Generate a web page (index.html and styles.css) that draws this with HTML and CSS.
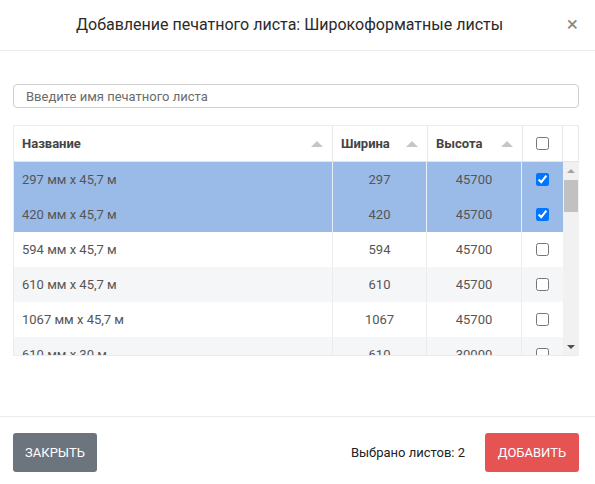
FILE: index.html
```html
<!DOCTYPE html>
<html lang="ru">
<head>
<meta charset="utf-8">
<link rel="stylesheet" href="styles.css">
</head>
<body>
<div class="modal">
  <div class="modal-header">
    <div class="title">Добавление печатного листа: Широкоформатные листы</div>
    <div class="close">×</div>
  </div>
  <div class="modal-body">
    <input class="search" type="text" placeholder="Введите имя печатного листа">
    <div class="grid">
      <div class="grid-head">
        <div class="hcell"><span>Название</span><i class="sort"></i></div>
        <div class="hcell"><span>Ширина</span><i class="sort"></i></div>
        <div class="hcell"><span>Высота</span><i class="sort"></i></div>
        <div class="hcell check"><input type="checkbox"></div>
        <div class="hcell blank"></div>
      </div>
      <div class="grid-main">
        <div class="rows">
          <div class="row sel"><div class="c name">297 мм x 45,7 м</div><div class="c num">297</div><div class="c num">45700</div><div class="c check"><input type="checkbox" checked></div></div>
          <div class="row sel"><div class="c name">420 мм x 45,7 м</div><div class="c num">420</div><div class="c num">45700</div><div class="c check"><input type="checkbox" checked></div></div>
          <div class="row"><div class="c name">594 мм x 45,7 м</div><div class="c num">594</div><div class="c num">45700</div><div class="c check"><input type="checkbox"></div></div>
          <div class="row alt"><div class="c name">610 мм x 45,7 м</div><div class="c num">610</div><div class="c num">45700</div><div class="c check"><input type="checkbox"></div></div>
          <div class="row"><div class="c name">1067 мм x 45,7 м</div><div class="c num">1067</div><div class="c num">45700</div><div class="c check"><input type="checkbox"></div></div>
          <div class="row alt"><div class="c name">610 мм x 30 м</div><div class="c num">610</div><div class="c num">30000</div><div class="c check"><input type="checkbox"></div></div>
        </div>
        <div class="scrollbar">
          <div class="arrow up"></div>
          <div class="thumb"></div>
          <div class="track"></div>
          <div class="arrow down"></div>
        </div>
      </div>
    </div>
  </div>
  <div class="modal-footer">
    <button class="btn btn-close">ЗАКРЫТЬ</button>
    <div class="footer-right">
      <span class="count">Выбрано листов: 2</span>
      <button class="btn btn-add">ДОБАВИТЬ</button>
    </div>
  </div>
</div>
</body>
</html>
```
FILE: styles.css
```css
* { box-sizing: border-box; }
html, body { margin: 0; padding: 0; background: #fff; }
body { font-family: Roboto, "Liberation Sans", sans-serif; color: #333; }
.modal { width: 595px; height: 484px; display: flex; flex-direction: column; }
.modal-header {
  height: 51px; border-bottom: 1px solid #e9ecef;
  display: flex; align-items: center;
  padding: 0 17px 0 76px;
}
.title { font-size: 16px; color: #2a2a2a; flex: 1; padding-bottom: 2px; }
.close { font-size: 21px; color: #888; line-height: 1; padding-bottom: 2px; }
.modal-body { height: 365px; padding: 33px 16px 0 13px; }
.search {
  display: block; width: 566px; height: 24px; margin: 0;
  border: 1px solid #cfcfcf; border-radius: 4px; padding: 0 12px;
  font-family: Roboto, "Liberation Sans", sans-serif; font-size: 13px; color: #333;
  outline: none;
}
.search::placeholder { color: #6b6b6b; }
.grid { margin-top: 17px; width: 566px; border: 1px solid #ececec; border-right: 0; }
.grid-head {
  display: grid; grid-template-columns: 319px 95px 95px 40px 16px;
  height: 36px; border-bottom: 1px solid #e4e4e4;
}
.hcell {
  display: flex; align-items: center; justify-content: space-between;
  padding: 0 9px 0 8px; border-right: 1px solid #e8e8e8;
  font-size: 13px; font-weight: 700; color: #444;
}
.hcell.check { justify-content: center; padding: 0; }
.hcell.blank { padding: 0; }
.sort { width: 0; height: 0; border-left: 6px solid transparent; border-right: 6px solid transparent; border-bottom: 6px solid #c6c6c6; }
.hcell input, .c.check input { margin: 0; width: 13px; height: 13px; }
.grid-main { display: flex; height: 193px; }
.rows { width: 549px; overflow: hidden; }
.row { display: grid; grid-template-columns: 318px 95px 95px 41px; height: 35px; font-size: 13px; color: #555; }
.row.sel { background: #9abbe8; }
.row.alt { background: #f5f6f8; }
.c { display: flex; align-items: center; border-right: 1px solid #ececec; }
.row.sel .c { border-right-color: #e8eef8; }
.c.name { padding-left: 8px; border-right: 0; }
.c.num { justify-content: center; }
.c.num:nth-child(2) { border-left: 1px solid #ececec; }
.row.sel .c.num:nth-child(2) { border-left-color: #e8eef8; }
.c.check { justify-content: center; border-right: 0; padding-right: 1px; }
.scrollbar { width: 16px; background: #f1f1f1; display: flex; flex-direction: column; }
.arrow { height: 17px; display: flex; align-items: center; justify-content: center; }
.arrow.up::before { content: ""; border-left: 4px solid transparent; border-right: 4px solid transparent; border-bottom: 4px solid #a3a3a3; }
.arrow.down::before { content: ""; border-left: 4px solid transparent; border-right: 4px solid transparent; border-top: 4px solid #505050; }
.thumb { height: 32px; width: 14px; margin-left: 1px; background: #c1c1c1; margin-top: 1px; }
.track { flex: 1; }
.modal-footer {
  border-top: 1px solid #e9ecef; flex: 1;
  display: flex; justify-content: space-between; align-items: flex-start;
  padding: 16px 16px 0 13px;
}
.footer-right { display: flex; align-items: center; gap: 20px; }
.count { font-size: 13px; color: #222; }
.btn {
  height: 39px; border: 0; border-radius: 3px; color: #fff;
  font-family: Roboto, "Liberation Sans", sans-serif; font-size: 13px; padding: 0 12px;
}
.btn-close { background: #6c757d; width: 84px; }
.btn-add { background: #e55353; width: 94px; }
```
